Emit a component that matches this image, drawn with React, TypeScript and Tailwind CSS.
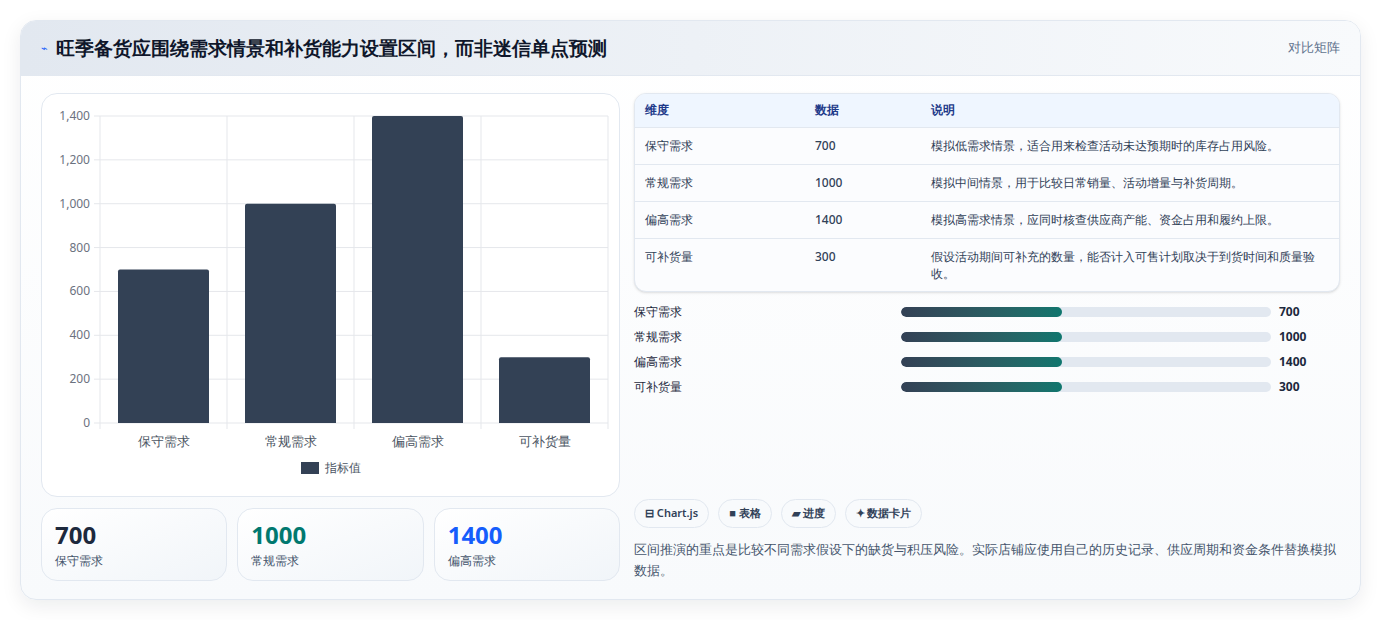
import React from 'react';

const rows = [
  { name: '保守需求', value: 700, note: '模拟低需求情景，适合用来检查活动未达预期时的库存占用风险。' },
  { name: '常规需求', value: 1000, note: '模拟中间情景，用于比较日常销量、活动增量与补货周期。' },
  { name: '偏高需求', value: 1400, note: '模拟高需求情景，应同时核查供应商产能、资金占用和履约上限。' },
  { name: '可补货量', value: 300, note: '假设活动期间可补充的数量，能否计入可售计划取决于到货时间和质量验收。' },
];

const Chart: React.FC = () => {
  // plot area in svg coords (card-local)
  const x0 = 58, x1 = 566, yTop = 22, yBot = 329;
  const ticks = [0, 200, 400, 600, 800, 1000, 1200, 1400];
  const colW = (x1 - x0) / 4;
  const y = (v: number) => yBot - (v / 1400) * (yBot - yTop);
  return (
    <svg width="577" height="402" className="block">
      {ticks.map((t) => (
        <g key={t}>
          <line x1={x0 - 6} x2={x1} y1={y(t)} y2={y(t)} stroke="#e5e7eb" />
          <text x={x0 - 10} y={y(t) + 4} textAnchor="end" fontSize="12" fill="#6b7280">
            {t.toLocaleString('en-US')}
          </text>
        </g>
      ))}
      {[0, 1, 2, 3, 4].map((i) => (
        <line key={i} x1={x0 + i * colW} x2={x0 + i * colW} y1={yTop} y2={yBot + 6} stroke="#e5e7eb" />
      ))}
      {rows.map((r, i) => {
        const cx = x0 + colW * (i + 0.5);
        return (
          <g key={r.name}>
            <path
              d={`M${cx - 45.5} ${yBot} V${y(r.value) + 2} Q${cx - 45.5} ${y(r.value)} ${cx - 43.5} ${y(r.value)} H${cx + 43.5} Q${cx + 45.5} ${y(r.value)} ${cx + 45.5} ${y(r.value) + 2} V${yBot} Z`}
              fill="#334155"
            />
            <text x={cx} y={yBot + 23} textAnchor="middle" fontSize="13" fill="#4b5563">{r.name}</text>
          </g>
        );
      })}
      <rect x="259" y="368" width="18" height="12" fill="#334155" />
      <text x="283" y="378" fontSize="12" fill="#4b5563">指标值</text>
    </svg>
  );
};

const App: React.FC = () => {
  return (
    <div className="w-[1381px] h-[620px] bg-white p-5 font-['Noto_Sans','Noto_Sans_CJK_SC',sans-serif]">
      <div className="rounded-2xl border border-slate-200 shadow-[0_6px_20px_rgba(15,23,42,0.08)] overflow-hidden bg-gradient-to-b from-white to-[#f8fafc]">
        <div className="h-[55px] flex items-center justify-between px-5 bg-gradient-to-r from-[#e2e8f0] to-[#f8fafc] border-b border-slate-200">
          <div className="flex items-center gap-2">
            <span className="text-[11px] text-blue-600">⌁</span>
            <h1 className="text-[19px] font-bold text-slate-900">旺季备货应围绕需求情景和补货能力设置区间，而非迷信单点预测</h1>
          </div>
          <span className="text-[13px] text-slate-500 font-medium">对比矩阵</span>
        </div>
        <div className="flex gap-[14px] px-5 pt-[17px] pb-[18px]">
          <div className="w-[579px] flex flex-col gap-[11px]">
            <div className="h-[404px] rounded-2xl border border-slate-200 bg-white">
              <Chart />
            </div>
            <div className="grid grid-cols-3 gap-[10px]">
              {[
                { v: '700', c: 'text-slate-800', l: '保守需求' },
                { v: '1000', c: 'text-teal-700', l: '常规需求' },
                { v: '1400', c: 'text-blue-600', l: '偏高需求' },
              ].map((s) => (
                <div key={s.l} className="h-[73px] rounded-2xl border border-slate-200 bg-gradient-to-br from-white to-[#f1f5f9] px-[13px] pt-[9px]">
                  <div className={`text-[24px] font-bold leading-[34px] ${s.c}`}>{s.v}</div>
                  <div className="text-[12px] text-slate-600">{s.l}</div>
                </div>
              ))}
            </div>
          </div>
          <div className="flex-1 flex flex-col">
            <div className="rounded-xl border border-slate-200 overflow-hidden bg-[#fbfcfe] shadow-sm">
              <table className="w-full text-[12px] text-slate-700">
                <thead>
                  <tr className="bg-[#eff6ff] text-[#1e3a8a] h-[33px] text-left">
                    <th className="font-semibold pl-[10px] w-[180px]">维度</th>
                    <th className="font-semibold w-[116px]">数据</th>
                    <th className="font-semibold">说明</th>
                  </tr>
                </thead>
                <tbody>
                  {rows.map((r) => (
                    <tr key={r.name} className="border-t border-slate-200 align-top">
                      <td className="pl-[10px] py-[9px] font-medium">{r.name}</td>
                      <td className="py-[9px] font-medium">{r.value}</td>
                      <td className="py-[9px] pr-3 leading-[17px] font-medium">{r.note}</td>
                    </tr>
                  ))}
                </tbody>
              </table>
            </div>
            <div className="mt-[11px] flex flex-col gap-[7px]">
              {rows.map((r) => (
                <div key={r.name} className="flex items-center h-[18px] text-[12px]">
                  <span className="w-[267px] font-medium text-slate-800">{r.name}</span>
                  <div className="w-[370px] h-[10px] rounded-full bg-slate-200 overflow-hidden">
                    <div className="h-full w-[43.5%] rounded-full bg-gradient-to-r from-[#334155] to-[#0f766e]" />
                  </div>
                  <span className="ml-2 font-bold text-slate-800">{r.value}</span>
                </div>
              ))}
            </div>
            <div className="mt-auto flex gap-[9px]">
              {['⊟ Chart.js', '■ 表格', '▰ 进度', '✦ 数据卡片'].map((p) => (
                <span key={p} className="h-[29px] px-[10px] flex items-center rounded-full border border-slate-200 bg-[#f8fafc] text-[11px] font-semibold text-slate-700">{p}</span>
              ))}
            </div>
            <p className="mt-[11px] text-[13px] leading-[21px] text-slate-600 font-medium">
              区间推演的重点是比较不同需求假设下的缺货与积压风险。实际店铺应使用自己的历史记录、供应周期和资金条件替换模拟数据。
            </p>
          </div>
        </div>
      </div>
    </div>
  );
};

export default App;
